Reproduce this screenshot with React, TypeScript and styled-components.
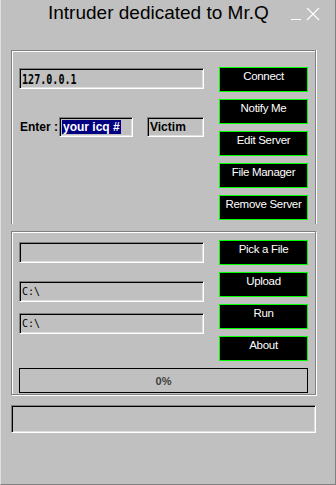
import React from "react";
import styled, { createGlobalStyle } from "styled-components";

const GlobalStyle = createGlobalStyle`
  html, body {
    margin: 0;
    padding: 0;
    background: #c0c0c0;
  }
  * {
    box-sizing: border-box;
  }
`;

const Window = styled.div`
  width: 336px;
  height: 485px;
  background: #c0c0c0;
  border-left: 1px solid #dfdfdf;
  border-right: 1px solid #808080;
  border-bottom: 1px solid #808080;
  display: flex;
  flex-direction: column;
  padding-left: 10px;
  font-family: "Liberation Sans", Arial, sans-serif;
  overflow: hidden;
`;

const TitleBar = styled.div`
  height: 50px;
  display: flex;
  align-items: flex-start;
  justify-content: space-between;
  padding: 2px 13px 0 37px;
`;

const Title = styled.div`
  font-size: 19px;
  line-height: 22px;
  color: #000;
  white-space: nowrap;
`;

const Frame = styled.div<{ $h: number; $open?: boolean }>`
  width: 305px;
  height: ${(p) => p.$h}px;
  border: 1px solid #808080;
  border-bottom: ${(p) => (p.$open ? "none" : "1px solid #808080")};
  box-shadow: ${(p) =>
    p.$open
      ? "inset 1px 1px #fff, 1px 0 #fff"
      : "inset 1px 1px #fff, 1px 1px #fff"};
  display: flex;
  flex-direction: column;
  padding-left: 7px;
`;

const FrameRow = styled.div<{ $top: number }>`
  display: flex;
  gap: 15px;
  padding-top: ${(p) => p.$top}px;
`;

const LeftCol = styled.div`
  width: 185px;
  display: flex;
  flex-direction: column;
`;

const ButtonCol = styled.div`
  display: flex;
  flex-direction: column;
  gap: 7px;
`;

const Button = styled.button`
  width: 89px;
  height: 25px;
  background: #000;
  border: 1px solid #00ff00;
  color: #fff;
  font-family: "Liberation Sans", Arial, sans-serif;
  font-size: 11.5px;
  letter-spacing: -0.3px;
  line-height: 14px;
  padding: 1px 0 0;
  display: flex;
  justify-content: center;
  align-items: flex-start;
  white-space: nowrap;
  cursor: pointer;
`;

const Field = styled.div<{ $w?: number; $h?: number; $mt?: number }>`
  width: ${(p) => (p.$w ? `${p.$w}px` : "100%")};
  height: ${(p) => p.$h ?? 21}px;
  margin-top: ${(p) => p.$mt ?? 0}px;
  background: #c0c0c0;
  border: 1px solid;
  border-color: #808080 #fff #fff #808080;
  box-shadow: inset 1px 1px #000, inset -1px -1px #dfdfdf;
  display: flex;
  align-items: center;
  padding-left: 2px;
  overflow: hidden;
  white-space: nowrap;
`;

const MonoBold = styled.span`
  display: inline-block;
  font-family: "DejaVu Sans Mono", monospace;
  font-weight: bold;
  font-size: 14px;
  transform: scaleX(0.72);
  transform-origin: left center;
  color: #000;
`;

const Path = styled.span`
  font-family: "DejaVu Sans Mono", monospace;
  font-size: 10px;
  color: #000;
`;

const BoldText = styled.span`
  font-family: "Liberation Sans", Arial, sans-serif;
  font-weight: bold;
  font-size: 12px;
  color: #000;
`;

const Selected = styled(BoldText)`
  background: #000080;
  color: #fff;
  line-height: 14px;
  padding: 0 1px;
`;

const EnterRow = styled.div`
  display: flex;
  align-items: center;
  margin-top: 28px;
  height: 20px;
`;

const Label = styled(BoldText)`
  width: 40px;
  padding-left: 1px;
`;

const Spacer = styled.div<{ $w: number }>`
  width: ${(p) => p.$w}px;
`;

const Gap = styled.div<{ $h: number }>`
  height: ${(p) => p.$h}px;
  flex: none;
`;

const Progress = styled.div`
  width: 289px;
  height: 25px;
  margin-top: 7px;
  border: 1px solid #000;
  display: flex;
  align-items: center;
  justify-content: center;
  font-family: "Liberation Sans", Arial, sans-serif;
  font-weight: bold;
  font-size: 11px;
  color: #404040;
`;

const StatusBar = styled(Field)`
  width: 305px;
  height: 28px;
  margin-top: 10px;
`;

const WindowControls = () => (
  <svg width="32" height="16" viewBox="0 0 32 16" style={{ marginTop: 5 }}>
    <line x1="1" y1="12.5" x2="11" y2="12.5" stroke="#fff" strokeWidth="1" />
    <line x1="17" y1="1" x2="29" y2="13" stroke="#fff" strokeWidth="1.1" />
    <line x1="29" y1="1" x2="17" y2="13" stroke="#fff" strokeWidth="1.1" />
  </svg>
);

const App = () => {
  return (
    <Window>
      <GlobalStyle />
      <TitleBar>
        <Title>Intruder dedicated to Mr.Q</Title>
        <WindowControls />
      </TitleBar>

      <Frame $h={174} $open>
        <FrameRow $top={16}>
          <LeftCol>
            <Field $mt={1}>
              <MonoBold>127.0.0.1</MonoBold>
            </Field>
            <EnterRow>
              <Label>Enter :</Label>
              <Field $w={74} $h={20}>
                <Selected>your icq #</Selected>
              </Field>
              <Spacer $w={14} />
              <Field $w={57} $h={20}>
                <BoldText>Victim</BoldText>
              </Field>
            </EnterRow>
          </LeftCol>
          <ButtonCol>
            <Button>Connect</Button>
            <Button>Notify Me</Button>
            <Button>Edit Server</Button>
            <Button>File Manager</Button>
            <Button>Remove Server</Button>
          </ButtonCol>
        </FrameRow>
      </Frame>

      <Gap $h={7} />

      <Frame $h={164}>
        <FrameRow $top={8}>
          <LeftCol>
            <Field $mt={2} />
            <Field $mt={18}>
              <Path>C:\</Path>
            </Field>
            <Field $mt={11}>
              <Path>C:\</Path>
            </Field>
          </LeftCol>
          <ButtonCol>
            <Button>Pick a File</Button>
            <Button>Upload</Button>
            <Button>Run</Button>
            <Button>About</Button>
          </ButtonCol>
        </FrameRow>
        <Progress>0%</Progress>
      </Frame>

      <StatusBar />
    </Window>
  );
};

export default App;
